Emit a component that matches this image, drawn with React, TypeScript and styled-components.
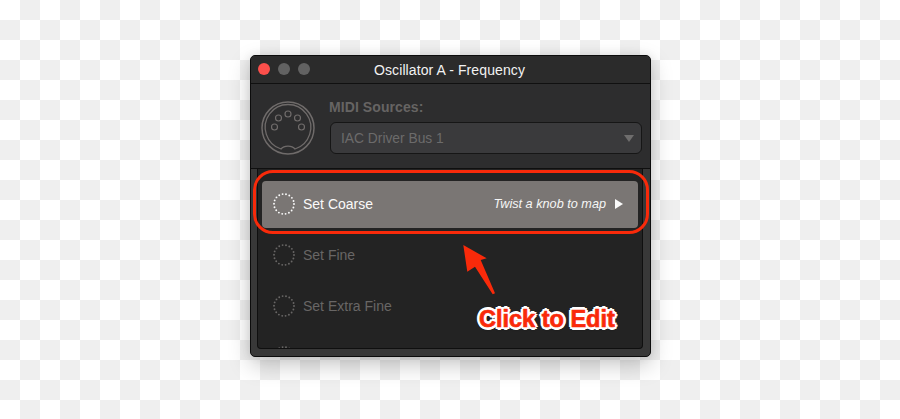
import React from "react";
import styled, { createGlobalStyle } from "styled-components";

const Global = createGlobalStyle`
  html, body { margin: 0; padding: 0; background: #fff; }
  body { font-family: "Liberation Sans", Arial, sans-serif; }
`;

const Page = styled.div`
  position: relative;
  width: 900px;
  height: 419px;
  overflow: hidden;
  padding: 55px 0 0 250px;
  box-sizing: border-box;
  background-color: #fff;
  background-image: conic-gradient(#efefef 25%, #fff 0 50%, #efefef 0 75%, #fff 0);
  background-size: 40px 40px;
`;

const Win = styled.div`
  width: 401px;
  height: 302px;
  box-sizing: border-box;
  display: flex;
  flex-direction: column;
  background: #383838;
  border: 1px solid #0c0c0c;
  border-radius: 5px;
  box-shadow: 0 8px 22px rgba(0, 0, 0, 0.22), 0 0 10px rgba(0, 0, 0, 0.08);
  overflow: hidden;
`;

const TitleBar = styled.div`
  position: relative;
  height: 27px;
  flex: none;
  box-sizing: content-box;
  padding-right: 2px;
  display: flex;
  align-items: center;
  justify-content: center;
  background: #2b2b2b;
  border-bottom: 1px solid #101010;
`;

const Lights = styled.div`
  position: absolute;
  left: 7px;
  top: 7px;
  display: flex;
  gap: 8px;
`;

const Light = styled.span<{ $c: string }>`
  width: 12px;
  height: 12px;
  border-radius: 50%;
  background: ${(p) => p.$c};
`;

const Title = styled.div`
  color: #f2f2f2;
  font-size: 14px;
  letter-spacing: 0.1px;
`;

const Sources = styled.div`
  height: 85px;
  flex: none;
  box-sizing: border-box;
  display: flex;
  padding: 15px 8px 0 10px;
  background: #2d2d2e;
  border-bottom: 1px solid #0f0f0f;
`;

const MidiIcon = styled.svg`
  width: 54px;
  height: 54px;
  margin-top: 2px;
  flex: none;
`;

const SourceCol = styled.div`
  flex: 1;
  margin-left: 14px;
  display: flex;
  flex-direction: column;
`;

const SourceLabel = styled.div`
  font-size: 14px;
  font-weight: 700;
  letter-spacing: 0.08px;
  color: #666463;
  line-height: 16px;
  margin-bottom: 7px;
`;

const Select = styled.div`
  height: 32px;
  box-sizing: border-box;
  margin-left: 1px;
  display: flex;
  align-items: center;
  justify-content: space-between;
  padding: 1px 7px 0 10px;
  background: #3a3a3c;
  border: 1px solid #161616;
  border-radius: 6px;
  color: #6c6b6b;
  font-size: 13.8px;
`;

const Caret = styled.span`
  width: 0;
  height: 0;
  border-left: 5px solid transparent;
  border-right: 5px solid transparent;
  border-top: 7px solid #6e6d6d;
`;

const ListFrame = styled.div`
  flex: 1;
  min-height: 0;
  margin: 0 7px 7px 6px;
  box-sizing: border-box;
  background: #232323;
  border: 1px solid #0f0f0f;
  border-top: none;
  border-radius: 0 0 4px 4px;
  overflow: hidden;
  padding: 12px 4px 0;
  display: flex;
  flex-direction: column;
  gap: 4px;
`;

const Row = styled.div<{ $active?: boolean }>`
  height: 47px;
  flex: none;
  box-sizing: border-box;
  display: flex;
  align-items: center;
  padding: 0 15px 2px 10px;
  border-radius: 4px;
  background: ${(p) => (p.$active ? "#7a7674" : "transparent")};
  color: ${(p) => (p.$active ? "#fafafa" : "#686665")};
  font-size: 14px;
`;

const Dots = styled.svg`
  width: 24px;
  height: 24px;
  flex: none;
  margin-right: 7px;
`;

const RowLabel = styled.span`
  flex: 1;
`;

const Hint = styled.span`
  font-style: italic;
  font-size: 12.7px;
  color: #f6f6f6;
  margin-right: 9px;
`;

const Play = styled.span`
  width: 0;
  height: 0;
  border-top: 5px solid transparent;
  border-bottom: 5px solid transparent;
  border-left: 8px solid #fafafa;
`;

const Highlight = styled.div`
  position: absolute;
  left: 253px;
  top: 170px;
  width: 396px;
  height: 64px;
  box-sizing: border-box;
  border: 3px solid #f92a0a;
  border-radius: 20px;
`;

const Arrow = styled.svg`
  position: absolute;
  left: 455px;
  top: 238px;
  width: 50px;
  height: 62px;
`;

const Callout = styled.div`
  position: absolute;
  left: 479px;
  top: 306px;
  font-size: 23.5px;
  line-height: 26px;
  font-weight: 700;
  color: #f92a0a;
  -webkit-text-stroke: 0.7px #f92a0a;
  text-shadow: 2px 0 0 #fff, -2px 0 0 #fff, 0 2px 0 #fff, 0 -2px 0 #fff, 1.5px 1.5px 0 #fff,
    -1.5px 1.5px 0 #fff, 1.5px -1.5px 0 #fff, -1.5px -1.5px 0 #fff, 3px 0 0 #fff, -3px 0 0 #fff,
    0 3px 0 #fff, 0 -3px 0 #fff, 2px 2px 0 #fff, -2px 2px 0 #fff, 2px -2px 0 #fff, -2px -2px 0 #fff,
    0 3px 2px rgba(0, 0, 0, 0.35);
  white-space: nowrap;
`;

const Ring = () => (
  <Dots viewBox="0 0 24 24">
    <circle cx="12" cy="12" r="10" fill="none" stroke="currentColor" strokeWidth="1.9" strokeLinecap="round" strokeDasharray="0 3.49" />
  </Dots>
);

export default function App() {
  return (
    <Page>
      <Global />
      <Win>
        <TitleBar>
          <Lights>
            <Light $c="#fc4f4b" />
            <Light $c="#626262" />
            <Light $c="#626262" />
          </Lights>
          <Title>Oscillator A - Frequency</Title>
        </TitleBar>
        <Sources>
          <MidiIcon viewBox="0 0 54 54" fill="none" stroke="#6f6b6a">
            <circle cx="27" cy="27" r="26" strokeWidth="1.5" />
            <path d="M20 48A22.800 22.800 0 1 1 34 48A8 5.500 0 0 0 20 48Z" strokeWidth="1.3" />
            <circle cx="13.500" cy="26" r="3" strokeWidth="1.2" />
            <circle cx="17.500" cy="17" r="3" strokeWidth="1.2" />
            <circle cx="27" cy="13" r="3" strokeWidth="1.2" />
            <circle cx="36.500" cy="17" r="3" strokeWidth="1.2" />
            <circle cx="40.500" cy="26" r="3" strokeWidth="1.2" />
          </MidiIcon>
          <SourceCol>
            <SourceLabel>MIDI Sources:</SourceLabel>
            <Select>
              IAC Driver Bus 1
              <Caret />
            </Select>
          </SourceCol>
        </Sources>
        <ListFrame>
          <Row $active>
            <Ring />
            <RowLabel>Set Coarse</RowLabel>
            <Hint>Twist a knob to map</Hint>
            <Play />
          </Row>
          <Row>
            <Ring />
            <RowLabel>Set Fine</RowLabel>
          </Row>
          <Row>
            <Ring />
            <RowLabel>Set Extra Fine</RowLabel>
          </Row>
          <Row>
            <Ring />
          </Row>
        </ListFrame>
      </Win>
      <Highlight />
      <Arrow viewBox="0 0 50 62">
        <path d="M8.300 7L31.700 20.300L25.700 22L40 55.300L37.700 56.300L20 28.700L12.300 33.700Z" fill="#f92a0a" />
      </Arrow>
      <Callout>Click to Edit</Callout>
    </Page>
  );
}
